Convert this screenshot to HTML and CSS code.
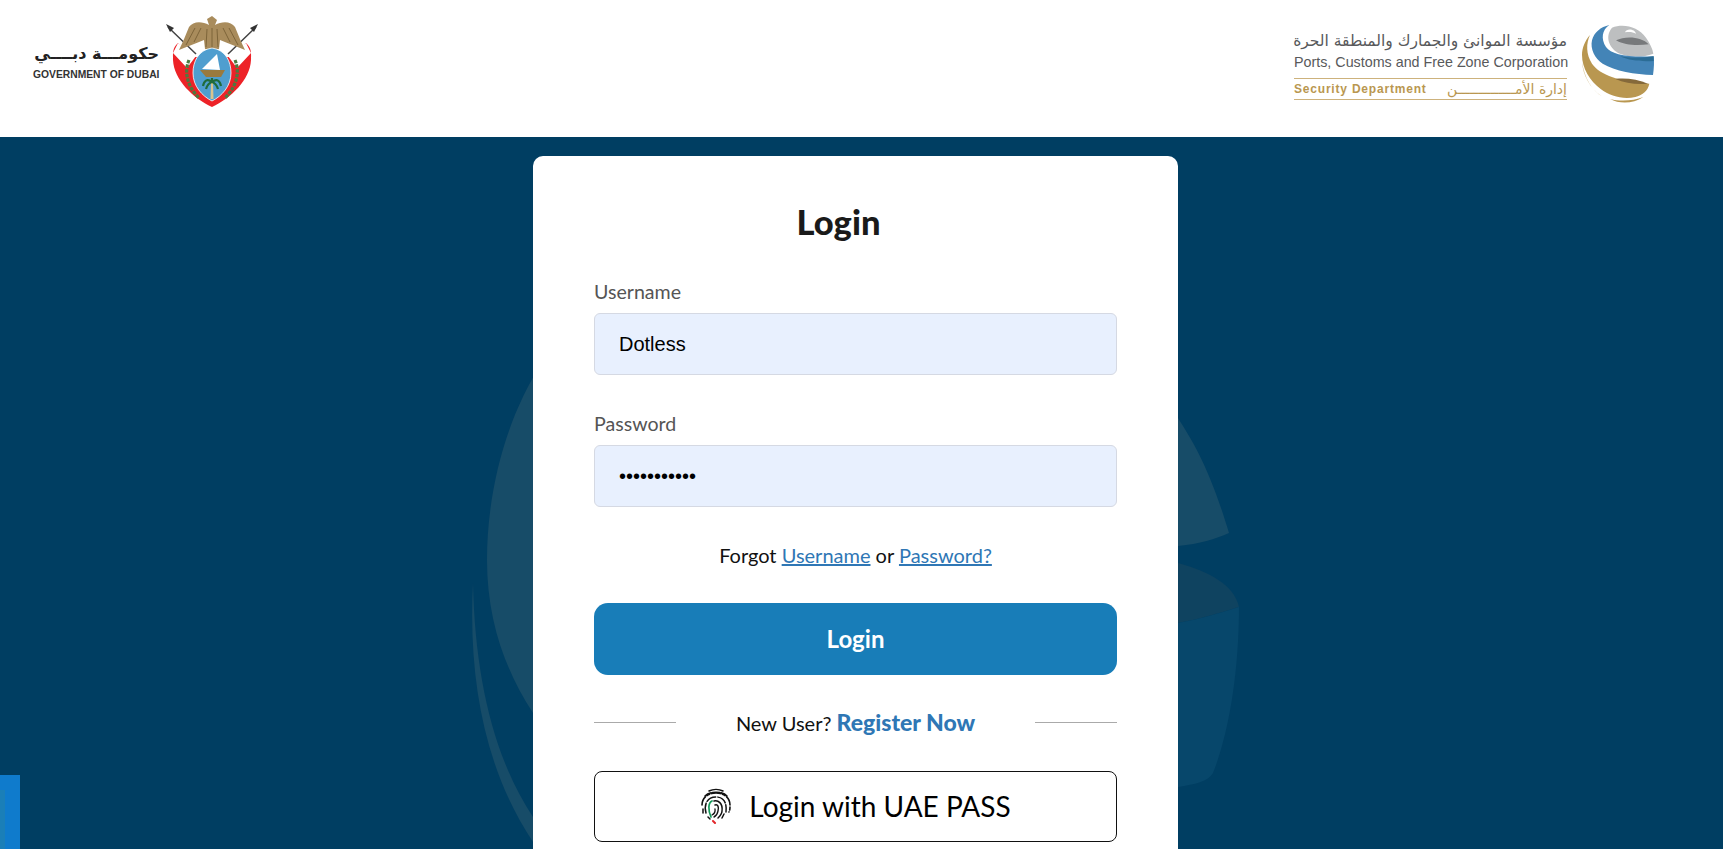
FILE: index.html
```html
<!DOCTYPE html>
<html lang="en">
<head>
  <meta charset="UTF-8">
  <meta name="viewport" content="width=device-width, initial-scale=1.0">
  <title>Login</title>
  <link rel="stylesheet" href="styles.css">
</head>
<body>
  <header class="site-header">
    <div class="gov-logo">
      <div class="gov-text">
        <div class="gov-arabic" dir="rtl">حكومـــة دبــــي</div>
        <div class="gov-english">GOVERNMENT OF DUBAI</div>
      </div>
      <svg class="gov-emblem" viewBox="0 0 100 105" aria-hidden="true">
        <path d="M13 33 C7 38 8 44 8 50 C9 70 28 88 47 97 C66 88 85 70 86 50 C86 44 87 38 81 33 L66 47 L28 47Z" fill="#ed2227"/>
        <path d="M13 33 L8 43 L22 58 L31 46Z M81 33 L86 43 L72 58 L63 46Z" fill="#fff"/>
        <path d="M3 17 L31 44 M91 17 L63 44" stroke="#444" stroke-width="1.5"/>
        <path d="M1 14 L9 18 L5 22Z M93 14 L85 18 L89 22Z" fill="#333"/>
        <path d="M47 6 L42 9 L44 15 C37 11 28 11 24 17 C21 24 18 32 14 40 C22 37 31 33 39 30 L40 39 L54 39 L55 30 C63 33 72 37 80 40 C76 32 73 24 70 17 C66 11 57 11 50 15 L52 10Z" fill="#a98c5c"/>
        <path d="M42 19 L41 37 M47 18 L47 38 M52 19 L53 37 M30 18 L21 35 M36 18 L29 32 M64 18 L73 35 M58 18 L65 32" stroke="#7d6439" stroke-width="1" fill="none"/>
        <path d="M47 38 C61 40 66 52 66 63 C66 76 57 86 47 91 C37 86 28 76 28 63 C28 52 33 40 47 38Z" fill="#4f9ecf" stroke="#fff" stroke-width="0.8"/>
        <path d="M24 50 C19 62 22 76 34 88 M70 50 C75 62 72 76 60 88" stroke="#4c7a3f" stroke-width="3.2" stroke-dasharray="3.5 1.2" fill="none"/>
        <path d="M37 59 L52 44 L55 60Z" fill="#fff"/>
        <path d="M35 60 L60 60 L56 67 L41 67Z" fill="#9a7a3f"/>
        <path d="M46 73 L45.5 89 L48.5 89 L48 73" fill="#d8c48f"/>
        <path d="M47 72 C42 68 39 71 38 76 M47 72 C52 68 55 71 56 76 M47 72 C43 73 42 76 41 79 M47 72 C51 73 52 76 53 79 M47 72 L47 68" stroke="#1f6b3a" stroke-width="2.2" fill="none"/>
      </svg>
    </div>
    <div class="ports-logo">
      <div class="ports-text">
        <div class="ports-arabic" dir="rtl">مؤسسة الموانئ والجمارك والمنطقة الحرة</div>
        <div class="ports-english">Ports, Customs and Free Zone Corporation</div>
        <div class="ports-dept">
          <span>Security Department</span>
          <span class="ports-dept-ar" dir="rtl">إدارة الأمــــــــــــــن</span>
        </div>
      </div>
      <svg class="ports-globe" viewBox="0 0 270 270" aria-hidden="true">
        <path d="M126 38 C160 24 205 35 228 68 C240 85 248 102 250 116 C220 127 180 128 150 116 C120 104 102 66 126 38Z" fill="#bdbfc0"/>
        <path d="M138 76 C165 62 215 64 236 88 C205 92 165 92 138 76Z" fill="#77797b"/>
        <path d="M165 52 C170 38 195 42 198 56 C188 50 176 50 165 52Z" fill="#fff"/>
        <path d="M118 30 C96 44 92 72 108 96 C124 118 170 128 251 124 C253 140 252 160 249 180 C195 178 135 168 98 146 C74 130 60 102 66 76 C72 52 92 36 118 30Z" fill="#4384b7"/>
        <path d="M150 124 C185 130 220 128 251 124 L251 138 C215 140 180 138 150 124Z" fill="#2b6c95"/>
        <path d="M60 60 C48 85 48 118 66 146 C90 180 150 200 238 206 C234 228 216 240 196 246 C160 254 120 244 92 222 C60 198 36 160 36 120 C36 98 46 76 60 60Z" fill="#b99750"/>
        <path d="M136 192 C165 188 205 193 234 206 C200 210 165 204 136 192Z" fill="#85693a"/>
        <path d="M120 252 C150 268 190 266 220 246 C190 258 150 260 120 252Z" fill="#b99750"/>
        <path d="M36 140 C38 180 60 220 96 244 C66 226 44 190 36 140Z" fill="#d9c69a"/>
      </svg>
    </div>
  </header>

  <main class="page-main">
    <svg class="watermark" viewBox="0 137 1723 712" aria-hidden="true">
      <path d="M600 300 C520 360 487 470 487 560 C487 620 505 670 533 713 C640 560 1080 560 1178 546 C1200 544 1215 539 1229 533 C1210 470 1195 445 1178 418 C1100 310 700 240 600 300Z" fill="#174c68"/>
      <path d="M473 583 C468 680 485 770 533 842 L560 870 L560 840 L533 817 C495 760 475 680 473 583Z" fill="#174c68"/>
      <path d="M1178 563 C1210 572 1234 585 1239 607 C1220 613 1200 619 1178 623 L1000 640 L1000 550Z" fill="#0f4360"/>
      <path d="M1178 623 C1200 619 1220 613 1239 607 C1239 650 1234 720 1213 773 C1208 782 1195 784 1178 787 L1000 800 L1000 640Z" fill="#07476b"/>
    </svg>

    <section class="login-card">
      <h1 class="login-title">Login</h1>
      <form>
        <div class="field">
          <label for="username">Username</label>
          <input id="username" type="text" value="Dotless">
        </div>
        <div class="field">
          <label for="password">Password</label>
          <input id="password" type="password" value="Dotless1234">
        </div>
        <p class="forgot">Forgot <a href="#">Username</a> or <a href="#">Password?</a></p>
        <button class="btn-login" type="button">Login</button>
        <div class="register-row">
          <span class="register-line"></span>
          <span>New User? <a href="#">Register Now</a></span>
          <span class="register-line"></span>
        </div>
        <button class="btn-uaepass" type="button">
          <svg class="uaepass-icon" viewBox="0 0 32 36" aria-hidden="true">
            <g fill="none" stroke="#111" stroke-linecap="round">
              <path d="M9 3 C13 1 19 1 23 3" stroke-width="1.6"/>
              <path d="M5 8 C10 3 22 3 27 8" stroke-width="1.6" stroke-dasharray="7 1.5"/>
              <path d="M2 17 C2 9 9 5 16 5 C23 5 30 9 30 17 C30 20 30 22 29 24" stroke-width="1.6" stroke-dasharray="9 2 3 2"/>
              <path d="M6 25 C4 18 6 9 16 9 C24 9 27 15 26 24" stroke-width="1.5" stroke-dasharray="10 2"/>
              <path d="M14 13 C18 12 23 15 22 23 C22 26 20 28 18 30" stroke-width="1.5"/>
              <path d="M15 17 C18 16 19 19 18 23 C17.5 26 16 28 14 29" stroke-width="1.4"/>
              <path d="M15 21 C15.5 24 14 26 12 27" stroke-width="1.3"/>
              <path d="M24 26 L22 30 M3 21 L3 25 M8 29 L10 31" stroke-width="1.5"/>
              <path d="M12 13 C8 15 8 22 11 29" stroke="#149a5a" stroke-width="1.7"/>
              <path d="M13 33 L15 35" stroke="#e2262b" stroke-width="2"/>
            </g>
          </svg>
          <span>Login with UAE PASS</span>
        </button>
      </form>
    </section>

    <div class="side-tab"><div class="side-tab-inner"></div></div>
  </main>
</body>
</html>
```

FILE: styles.css
```css
* {
  box-sizing: border-box;
}
html, body {
  height: 100%;
}
body {
  margin: 0;
  overflow: hidden;
  font-family: Lato, "Noto Sans", sans-serif;
  color: #111;
  background-color: #003e62;
}
.site-header {
  height: 137px;
  background-color: white;
  display: flex;
  justify-content: space-between;
  align-items: flex-start;
  padding: 10px 63px 0 33px;
}
.gov-logo {
  display: flex;
  align-items: center;
  gap: 6px;
}
.gov-text {
  width: 126px;
}
.gov-arabic {
  font-family: "DejaVu Sans", sans-serif;
  font-size: 16px;
  line-height: 24px;
  font-weight: bold;
  color: #222;
  white-space: nowrap;
}
.gov-english {
  font-family: "Liberation Sans", sans-serif;
  font-size: 10.3px;
  line-height: 17px;
  font-weight: bold;
  color: #333;
  white-space: nowrap;
}
.gov-emblem {
  width: 100px;
  height: 105px;
  flex-shrink: 0;
}
.ports-logo {
  display: flex;
  align-items: flex-start;
  gap: 3px;
  margin-top: 7px;
}
.ports-text {
  width: 273px;
  margin-top: 13px;
}
.ports-arabic {
  font-family: "DejaVu Sans", sans-serif;
  font-size: 15.5px;
  line-height: 23px;
  color: #58595b;
  white-space: nowrap;
}
.ports-english {
  font-family: "Liberation Sans", sans-serif;
  font-size: 14.3px;
  line-height: 18px;
  color: #58595b;
  white-space: nowrap;
}
.ports-dept {
  margin-top: 7px;
  height: 22px;
  border-top: 1px solid #cdb27c;
  border-bottom: 1px solid #cdb27c;
  display: flex;
  justify-content: space-between;
  align-items: center;
  font-family: "Liberation Sans", sans-serif;
  font-size: 12px;
  font-weight: bold;
  letter-spacing: 0.8px;
  color: #b99750;
}
.ports-dept-ar {
  font-family: "DejaVu Sans", sans-serif;
  font-weight: normal;
  letter-spacing: 0;
  font-size: 14px;
}
.ports-globe {
  width: 90px;
  height: 90px;
  flex-shrink: 0;
  margin-top: -2px;
}
.page-main {
  position: relative;
  height: 712px;
  overflow: hidden;
  padding: 19px 12px 0 0;
}
.watermark {
  position: absolute;
  top: 0;
  left: 0;
  width: 1723px;
  height: 712px;
}
.login-card {
  position: relative;
  width: 645px;
  margin: 0 auto;
  padding: 46px 61px 40px;
  background-color: white;
  border-radius: 10px;
}
.login-title {
  margin: 0 0 37px;
  padding-right: 34px;
  font-size: 34.5px;
  line-height: 40px;
  font-weight: 900;
  text-align: center;
  color: #1a1a1a;
}
.field {
  margin-bottom: 36px;
}
.field label {
  display: block;
  margin-bottom: 8px;
  font-size: 19.6px;
  line-height: 26px;
  color: #555;
}
.field input {
  display: block;
  width: 100%;
  height: 62px;
  padding: 0 24px;
  border: 1px solid #d5d9e3;
  border-radius: 6px;
  background-color: #e8f0fe;
  font-family: "Liberation Sans", sans-serif;
  font-size: 20px;
  color: #000;
}
.forgot {
  margin: 36px 0 36px;
  font-size: 20px;
  line-height: 24px;
  text-align: center;
}
.forgot a {
  color: #2f77b5;
}
.btn-login {
  display: block;
  width: 100%;
  height: 72px;
  padding-bottom: 3px;
  border: none;
  border-radius: 14px;
  background-color: #187db8;
  color: white;
  font-family: inherit;
  font-size: 24px;
  font-weight: bold;
}
.register-row {
  display: flex;
  justify-content: space-between;
  align-items: center;
  margin: 35px 0 37px;
  height: 24px;
  font-size: 20px;
}
.register-row a {
  color: #2f77b5;
  font-size: 23px;
  font-weight: 900;
  text-decoration: none;
}
.register-line {
  width: 82px;
  height: 1px;
  background-color: #aaa;
}
.btn-uaepass {
  display: flex;
  align-items: center;
  justify-content: center;
  gap: 17px;
  width: 100%;
  height: 71px;
  padding-bottom: 2px;
  border: 1px solid #111;
  border-radius: 8px;
  background-color: white;
  color: #000;
  font-family: inherit;
  font-size: 28px;
}
.uaepass-icon {
  width: 32px;
  height: 36px;
}
.side-tab {
  position: absolute;
  left: 0;
  bottom: 0;
  width: 20px;
  height: 74px;
  padding-top: 15px;
  background-color: #0f7bcc;
}
.side-tab-inner {
  width: 5px;
  height: 100%;
  background-color: #1a7fb8;
}
```
